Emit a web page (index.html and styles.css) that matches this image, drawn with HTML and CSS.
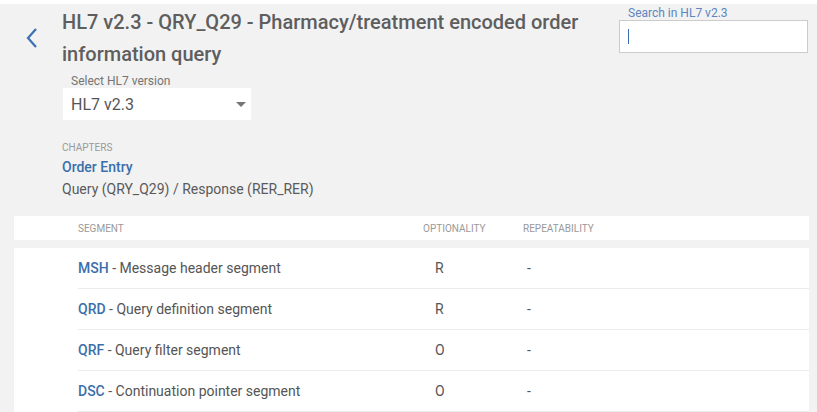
FILE: index.html
```html
<!DOCTYPE html>
<html>
<head>
<meta charset="utf-8">
<link rel="stylesheet" href="styles.css">
</head>
<body>
<div class="topstrip"></div>
<div class="page">
  <header class="header">
    <a class="back" href="#">
      <svg width="14" height="22" viewBox="0 0 14 22"><path d="M11 2 L3 11 L11 20" fill="none" stroke="#3a70b4" stroke-width="2.2"/></svg>
    </a>
    <div class="headmain">
      <h1 class="title">HL7 v2.3 - QRY_Q29 - Pharmacy/treatment encoded order information query</h1>
      <div class="version">
        <div class="field-label">Select HL7 version</div>
        <div class="select">
          <span>HL7 v2.3</span>
          <span class="caret"></span>
        </div>
      </div>
    </div>
    <div class="search">
      <div class="search-label">Search in HL7 v2.3</div>
      <div class="search-box"><span class="cursor"></span></div>
    </div>
  </header>

  <section class="chapters">
    <div class="chapters-label">CHAPTERS</div>
    <a class="chapter-link" href="#">Order Entry</a>
    <div class="chapter-sub">Query (QRY_Q29) / Response (RER_RER)</div>
  </section>

  <div class="table-head">
    <div class="col-seg">SEGMENT</div>
    <div class="col-opt">OPTIONALITY</div>
    <div class="col-rep">REPEATABILITY</div>
  </div>

  <div class="table-body">
    <div class="row">
      <div class="col-seg"><a class="code" href="#">MSH</a> - Message header segment</div>
      <div class="col-opt val">R</div>
      <div class="col-rep val">-</div>
    </div>
    <div class="row">
      <div class="col-seg"><a class="code" href="#">QRD</a> - Query definition segment</div>
      <div class="col-opt val">R</div>
      <div class="col-rep val">-</div>
    </div>
    <div class="row">
      <div class="col-seg"><a class="code" href="#">QRF</a> - Query filter segment</div>
      <div class="col-opt val">O</div>
      <div class="col-rep val">-</div>
    </div>
    <div class="row">
      <div class="col-seg"><a class="code" href="#">DSC</a> - Continuation pointer segment</div>
      <div class="col-opt val">O</div>
      <div class="col-rep val">-</div>
    </div>
  </div>
</div>
</body>
</html>
```

FILE: styles.css
```css
* { box-sizing: border-box; }
html, body {
  margin: 0;
  padding: 0;
  background: #f2f2f2;
  font-family: Roboto, "Liberation Sans", Arial, sans-serif;
  color: #555;
  overflow: hidden;
}
.topstrip {
  height: 4px;
  background: #fff;
}
.page {
  padding: 0 8px 0 14px;
}
.header {
  display: flex;
  align-items: flex-start;
}
.back {
  display: block;
  width: 48px;
  padding: 23px 0 0 11px;
}
.back svg { display: block; }
.headmain {
  width: 540px;
  padding-top: 2px;
}
.title {
  margin: 0;
  font-size: 20px;
  line-height: 32px;
  font-weight: 500;
  color: #5e5e5e;
  width: 530px;
}
.version {
  margin-top: 4px;
  padding-left: 1px;
}
.field-label {
  font-size: 12px;
  line-height: 14px;
  color: #757575;
  padding-left: 8px;
}
.select {
  width: 188px;
  height: 32px;
  background: #fff;
  display: flex;
  align-items: center;
  justify-content: space-between;
  padding: 0 5px 0 8px;
  font-size: 16px;
  color: #555;
}
.caret {
  width: 0;
  height: 0;
  border-left: 5px solid transparent;
  border-right: 5px solid transparent;
  border-top: 5px solid #757575;
  margin-top: 1px;
}
.search {
  margin-left: 17px;
  width: 189px;
  padding-top: 3px;
}
.search-label {
  font-size: 12px;
  line-height: 13px;
  color: #5b86c2;
  padding-left: 9px;
}
.search-box {
  height: 33px;
  background: #fff;
  border: 1px solid #cccccc;
  padding: 8px 0 0 8px;
}
.cursor {
  display: block;
  width: 1px;
  height: 15px;
  background: #3a6db0;
}
.chapters {
  padding: 21px 0 0 48px;
}
.chapters-label {
  font-size: 10px;
  line-height: 14px;
  color: #999;
}
.chapter-link {
  display: block;
  font-size: 14px;
  line-height: 24px;
  font-weight: 500;
  color: #3b6fab;
  text-decoration: none;
}
.chapter-sub {
  font-size: 14px;
  line-height: 20px;
  color: #5a5a5a;
}
.table-head {
  margin-top: 17px;
  background: #fff;
  height: 24px;
  display: grid;
  grid-template-columns: 345px 100px 1fr;
  align-items: center;
  padding-left: 64px;
  font-size: 10px;
  color: #999;
}
.table-body {
  margin-top: 8px;
  background: #fff;
  padding-left: 64px;
}
.row {
  display: grid;
  grid-template-columns: 345px 100px 1fr;
  align-items: center;
  height: 41px;
  border-bottom: 1px solid #ececec;
  font-size: 14px;
  color: #555;
}
.code {
  color: #3b6fab;
  font-weight: 500;
  text-decoration: none;
}
.col-opt.val { padding-left: 12px; }
.col-rep.val { padding-left: 4px; }
```
